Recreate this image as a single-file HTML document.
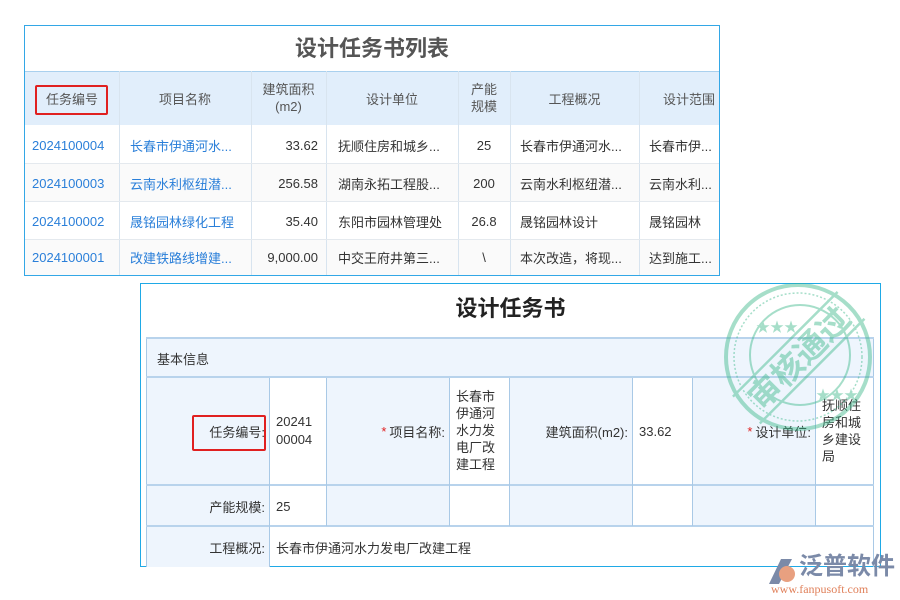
<!DOCTYPE html>
<html><head><meta charset="utf-8"><style>
*{margin:0;padding:0;box-sizing:border-box}
body{width:900px;height:600px;background:#fff;position:relative;overflow:hidden;font-family:"Liberation Sans","Noto Sans CJK SC",sans-serif;font-size:13px;color:#333}
.a{position:absolute}
.c{position:absolute;display:flex;align-items:center;white-space:nowrap}
.bl{color:#2a7fd9}
.vl{position:absolute;width:1px;background:#d8e4ef}
.hl{position:absolute;height:1px;background:#e4e9ee}
.bv{position:absolute;width:1px;background:#a9c9e6}
.bh{position:absolute;height:2px;background:#b8d3ec}
</style></head><body>
<!-- top panel -->
<div class="a" style="left:24px;top:25px;width:696px;height:251px;border:1px solid #33a7e6"></div>
<div class="c" style="left:25px;top:30px;width:694px;height:34px;justify-content:center;font-size:22px;font-weight:bold;color:#555">设计任务书列表</div>
<div class="a" style="left:25px;top:71px;width:694px;height:54px;background:#e1eefb;border-top:1px solid #a9d0ee"></div>
<div class="a" style="left:35px;top:85px;width:73px;height:30px;border:2px solid #e02020;border-radius:2px"></div>
<div class="c" style="left:25px;top:71px;width:94px;height:54px;justify-content:center;color:#555">任务编号</div>
<div class="c" style="left:119px;top:71px;width:132px;height:54px;justify-content:center;color:#555">项目名称</div>
<div class="c" style="left:251px;top:71px;width:75px;height:54px;justify-content:center;text-align:center;white-space:normal;color:#555;line-height:17px">建筑面积<br>(m2)</div>
<div class="c" style="left:326px;top:71px;width:132px;height:54px;justify-content:center;color:#555">设计单位</div>
<div class="c" style="left:458px;top:71px;width:52px;height:54px;justify-content:center;text-align:center;white-space:normal;color:#555;line-height:17px">产能<br>规模</div>
<div class="c" style="left:510px;top:71px;width:129px;height:54px;justify-content:center;color:#555">工程概况</div>
<div class="c" style="left:639px;top:71px;width:80px;height:54px;justify-content:flex-end;padding-right:4px;color:#555;overflow:hidden">设计范围</div>
<div class="vl" style="left:119px;top:71px;height:204px"></div>
<div class="vl" style="left:251px;top:71px;height:204px"></div>
<div class="vl" style="left:326px;top:71px;height:204px"></div>
<div class="vl" style="left:458px;top:71px;height:204px"></div>
<div class="vl" style="left:510px;top:71px;height:204px"></div>
<div class="vl" style="left:639px;top:71px;height:204px"></div>
<div class="hl" style="left:25px;top:163px;width:694px"></div>
<div class="hl" style="left:25px;top:201px;width:694px"></div>
<div class="hl" style="left:25px;top:239px;width:694px"></div>
<div class="a" style="left:25px;top:163px;width:694px;height:38px;background:#fafafa;z-index:-1"></div>
<div class="a" style="left:25px;top:239px;width:694px;height:36px;background:#fafafa;z-index:-1"></div>

<div class="c bl" style="left:32px;top:126px;height:38px">2024100004</div>
<div class="c bl" style="left:130px;top:126px;height:38px">长春市伊通河水...</div>
<div class="c" style="left:251px;top:126px;width:67px;height:38px;justify-content:flex-end">33.62</div>
<div class="c" style="left:338px;top:126px;height:38px">抚顺住房和城乡...</div>
<div class="c" style="left:458px;top:126px;width:52px;height:38px;justify-content:center">25</div>
<div class="c" style="left:520px;top:126px;height:38px">长春市伊通河水...</div>
<div class="c" style="left:649px;top:126px;height:38px">长春市伊...</div>

<div class="c bl" style="left:32px;top:164px;height:38px">2024100003</div>
<div class="c bl" style="left:130px;top:164px;height:38px">云南水利枢纽潜...</div>
<div class="c" style="left:251px;top:164px;width:67px;height:38px;justify-content:flex-end">256.58</div>
<div class="c" style="left:338px;top:164px;height:38px">湖南永拓工程股...</div>
<div class="c" style="left:458px;top:164px;width:52px;height:38px;justify-content:center">200</div>
<div class="c" style="left:520px;top:164px;height:38px">云南水利枢纽潜...</div>
<div class="c" style="left:649px;top:164px;height:38px">云南水利...</div>

<div class="c bl" style="left:32px;top:202px;height:38px">2024100002</div>
<div class="c bl" style="left:130px;top:202px;height:38px">晟铭园林绿化工程</div>
<div class="c" style="left:251px;top:202px;width:67px;height:38px;justify-content:flex-end">35.40</div>
<div class="c" style="left:338px;top:202px;height:38px">东阳市园林管理处</div>
<div class="c" style="left:458px;top:202px;width:52px;height:38px;justify-content:center">26.8</div>
<div class="c" style="left:520px;top:202px;height:38px">晟铭园林设计</div>
<div class="c" style="left:649px;top:202px;height:38px">晟铭园林</div>

<div class="c bl" style="left:32px;top:239px;height:37px">2024100001</div>
<div class="c bl" style="left:130px;top:239px;height:37px">改建铁路线增建...</div>
<div class="c" style="left:251px;top:239px;width:67px;height:37px;justify-content:flex-end">9,000.00</div>
<div class="c" style="left:338px;top:239px;height:37px">中交王府井第三...</div>
<div class="c" style="left:458px;top:239px;width:52px;height:37px;justify-content:center">\</div>
<div class="c" style="left:520px;top:239px;height:37px">本次改造，将现...</div>
<div class="c" style="left:649px;top:239px;height:37px">达到施工...</div>

<!-- bottom panel -->
<div class="a" style="left:140px;top:283px;width:741px;height:284px;border:1px solid #1fa9e6"></div>
<div class="c" style="left:140px;top:290px;width:741px;height:34px;justify-content:center;font-size:22px;font-weight:bold;color:#222">设计任务书</div>
<div class="a" style="left:146px;top:338px;width:728px;height:229px;border-left:1px solid #a9c9e6;border-right:1px solid #a9c9e6"></div>
<div class="a" style="left:147px;top:339px;width:726px;height:38px;background:#eef5fd"></div>
<div class="bh" style="left:146px;top:337px;width:728px"></div>
<div class="bh" style="left:146px;top:376px;width:728px"></div>
<div class="c" style="left:157px;top:339px;height:38px">基本信息</div>
<div class="a" style="left:147px;top:378px;width:122px;height:189px;background:#eef5fd"></div>
<div class="a" style="left:326px;top:378px;width:123px;height:148px;background:#eef5fd"></div>
<div class="a" style="left:509px;top:378px;width:123px;height:148px;background:#eef5fd"></div>
<div class="a" style="left:692px;top:378px;width:123px;height:148px;background:#eef5fd"></div>
<div class="bh" style="left:146px;top:484px;width:728px"></div>
<div class="bh" style="left:146px;top:525px;width:728px"></div>
<div class="bv" style="left:269px;top:378px;height:189px"></div>
<div class="bv" style="left:326px;top:378px;height:148px"></div>
<div class="bv" style="left:449px;top:378px;height:148px"></div>
<div class="bv" style="left:509px;top:378px;height:148px"></div>
<div class="bv" style="left:632px;top:378px;height:148px"></div>
<div class="bv" style="left:692px;top:378px;height:148px"></div>
<div class="bv" style="left:815px;top:378px;height:148px"></div>

<div class="a" style="left:192px;top:415px;width:74px;height:36px;border:2px solid #e02020;border-radius:2px"></div>
<div class="c" style="left:147px;top:378px;width:118px;height:107px;justify-content:flex-end">任务编号:</div>
<div class="a" style="left:276px;top:413px;line-height:18px">20241<br>00004</div>
<div class="c" style="left:326px;top:378px;width:119px;height:107px;justify-content:flex-end"><span style="color:#e02020;margin-right:3px">*</span>项目名称:</div>
<div class="a" style="left:456px;top:388px;line-height:17px;width:50px">长春市<br>伊通河<br>水力发<br>电厂改<br>建工程</div>
<div class="c" style="left:509px;top:378px;width:119px;height:107px;justify-content:flex-end">建筑面积(m2):</div>
<div class="c" style="left:639px;top:378px;height:107px">33.62</div>
<div class="c" style="left:692px;top:378px;width:119px;height:107px;justify-content:flex-end"><span style="color:#e02020;margin-right:3px">*</span>设计单位:</div>
<div class="a" style="left:822px;top:397px;line-height:17px">抚顺住<br>房和城<br>乡建设<br>局</div>
<div class="c" style="left:147px;top:486px;width:118px;height:40px;justify-content:flex-end">产能规模:</div>
<div class="c" style="left:276px;top:486px;height:40px">25</div>
<div class="c" style="left:147px;top:527px;width:118px;height:40px;justify-content:flex-end">工程概况:</div>
<div class="c" style="left:276px;top:527px;height:40px">长春市伊通河水力发电厂改建工程</div>

<!-- stamp -->
<svg class="a" style="left:718px;top:282px;opacity:.45" width="160" height="150" viewBox="0 0 160 150">
<circle cx="80" cy="75" r="72" fill="none" stroke="#3bb88a" stroke-width="4"/>
<circle cx="80" cy="75" r="64" fill="none" stroke="#3bb88a" stroke-width="1.5" stroke-dasharray="2 2"/>
<circle cx="82" cy="73" r="50" fill="none" stroke="#3bb88a" stroke-width="2"/>
<g transform="rotate(-45 80 75)">
<line x1="6" y1="57" x2="154" y2="57" stroke="#3bb88a" stroke-width="2.5"/>
<line x1="6" y1="95" x2="154" y2="95" stroke="#3bb88a" stroke-width="2.5"/>
<text x="80" y="88" text-anchor="middle" font-size="32" font-weight="bold" fill="#3bb88a" font-family="Noto Sans CJK SC,sans-serif">审核通过</text>
</g>
<text x="38" y="50" font-size="14" fill="#3bb88a">★★★</text>
<text x="98" y="118" font-size="14" fill="#3bb88a">★★★</text>
</svg>
<!-- logo -->
<svg class="a" style="left:768px;top:558px" width="30" height="28" viewBox="0 0 30 28">
<path d="M13 1 L24 1 L11 26 L1 26 Z" fill="#7b8aa8"/>
<circle cx="19" cy="16" r="8" fill="#e8a080"/>
</svg>
<div class="a" style="left:799px;top:553px;font-size:24px;font-weight:bold;color:#7b8aa8;white-space:nowrap;line-height:28px">泛普软件</div>
<div class="a" style="left:771px;top:582px;font-size:12px;color:#e0805a;font-family:'Liberation Serif',serif;white-space:nowrap">www.fanpusoft.com</div>
</body></html>
